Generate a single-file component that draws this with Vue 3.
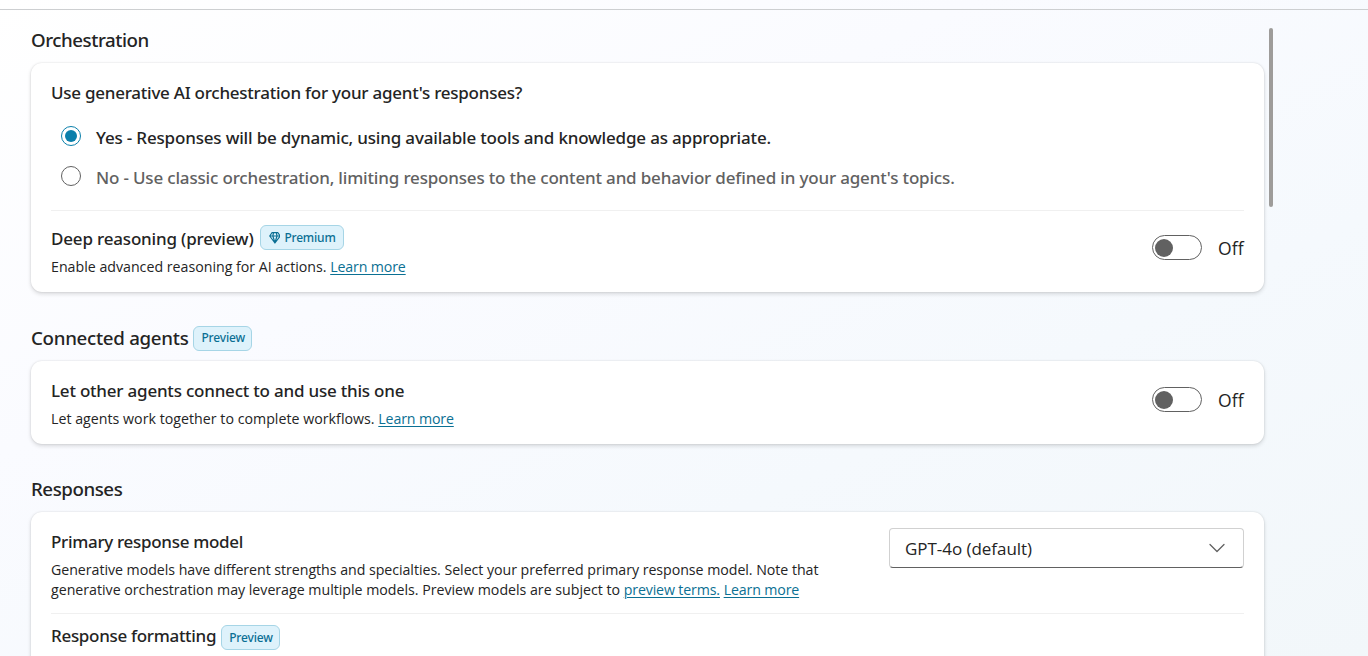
<script setup>
import { ref } from 'vue'

const mode = ref('yes')
const options = [
  { id: 'yes', text: 'Yes - Responses will be dynamic, using available tools and knowledge as appropriate.' },
  { id: 'no', text: "No - Use classic orchestration, limiting responses to the content and behavior defined in your agent's topics." }
]
</script>

<template>
  <div class="page">
    <div class="topbar"></div>
    <div class="body">
      <main class="content">
        <section class="orchestration">
          <h2 class="heading tight">Orchestration</h2>
          <div class="card">
            <h3 class="title question">Use generative AI orchestration for your agent's responses?</h3>
            <div class="options">
              <div
                v-for="o in options"
                :key="o.id"
                class="option"
                :class="{ selected: mode === o.id }"
                @click="mode = o.id"
              >
                <span class="radio"></span>
                <span class="label">{{ o.text }}</span>
              </div>
            </div>
            <div class="row deep">
              <div class="info">
                <div class="titleline">
                  <h3 class="title">Deep reasoning (preview)</h3>
                  <span class="badge premium">
                    <svg width="13" height="14" viewBox="0 0 13 14" fill="none" stroke="currentColor" stroke-width="1.3" stroke-linejoin="round">
                      <path d="M3.2 1.2h6.6l2.4 3.6-5.7 7.7L.8 4.8zM.8 4.8h11.4M4.2 4.8l2.3 7.3 2.3-7.3M4.2 4.8l.8-3.6M8.8 4.8 8 1.2" />
                    </svg>
                    <span>Premium</span>
                  </span>
                </div>
                <p class="desc">Enable advanced reasoning for AI actions. <a>Learn more</a></p>
              </div>
              <div class="switch"><span class="track"></span><span class="state">Off</span></div>
            </div>
          </div>
        </section>

        <section class="connected">
          <div class="headline">
            <h2 class="heading">Connected agents</h2>
            <span class="badge">Preview</span>
          </div>
          <div class="card">
            <div class="row">
              <div class="info">
                <h3 class="title">Let other agents connect to and use this one</h3>
                <p class="desc">Let agents work together to complete workflows. <a>Learn more</a></p>
              </div>
              <div class="switch"><span class="track"></span><span class="state">Off</span></div>
            </div>
          </div>
        </section>

        <section class="responses">
          <h2 class="heading tight">Responses</h2>
          <div class="card">
            <div class="row model">
              <div class="info">
                <h3 class="title snug">Primary response model</h3>
                <p class="desc long">
                  Generative models have different strengths and specialties. Select your preferred primary response model. Note that<br /><span class="second">generative orchestration may leverage multiple models. Preview models are subject to <a>preview terms.</a> <a>Learn more</a></span>
                </p>
              </div>
              <div class="select">
                <span>GPT-4o (default)</span>
                <svg width="16" height="10" viewBox="0 0 16 10" fill="none" stroke="#616161" stroke-width="1.3" stroke-linecap="round" stroke-linejoin="round">
                  <path d="M1 1.5 8 8.5l7-7" />
                </svg>
              </div>
            </div>
            <div class="titleline formatting">
              <h3 class="title snug">Response formatting</h3>
              <span class="badge">Preview</span>
            </div>
          </div>
        </section>
      </main>
      <div class="scrollbar"></div>
    </div>
  </div>
</template>

<style>
body {
  margin: 0;
  overflow: hidden;
}
</style>

<style scoped>
.page {
  height: 656px;
  overflow: hidden;
  box-sizing: border-box;
  background: linear-gradient(155deg, #fff 0%, #fafbff 35%, #f5f9fd 66%, #f2f7fa 100%);
  color: #242424;
  font-family: "Open Sans", "Noto Sans", sans-serif;
}
.topbar {
  height: 9px;
  border-bottom: 1px solid #cdcfd1;
}
.body {
  display: flex;
  gap: 5px;
  padding-left: 31px;
}
.content {
  width: 1233px;
  padding-top: 16px;
}
.scrollbar {
  width: 4px;
  height: 179px;
  margin-top: 18px;
  border-radius: 2px;
  background: #9e9c9a;
}
h2,
h3,
p {
  margin: 0;
}
.heading {
  font: 500 18.7px/28px "Noto Sans", sans-serif;
  letter-spacing: -0.28px;
  white-space: nowrap;
}
.heading.tight {
  letter-spacing: -0.44px;
}
.headline .heading {
  margin-top: -2px;
}
.card {
  box-sizing: border-box;
  padding: 18px 20px 0;
  border-radius: 11px;
  background: #fff;
  box-shadow: 0 0 2px rgba(0, 0, 0, 0.12), 0 2px 4px rgba(0, 0, 0, 0.14);
}
.orchestration .card {
  height: 229px;
  margin-top: 9px;
}
.title {
  font: 500 17px/24px "Noto Sans", sans-serif;
  letter-spacing: -0.18px;
  white-space: nowrap;
}
.title.question {
  letter-spacing: -0.25px;
}
.connected .title {
  letter-spacing: -0.215px;
}
.title.snug {
  letter-spacing: -0.31px;
}
.options {
  padding: 11px 0 14px;
  border-bottom: 1px solid #f0f0f0;
}
.option {
  display: flex;
  align-items: center;
  height: 40px;
  padding-left: 10px;
  gap: 15px;
  color: #616161;
}
.option.selected {
  color: #242424;
}
.radio {
  display: grid;
  place-items: center;
  box-sizing: border-box;
  width: 20px;
  height: 20px;
  border: 1px solid #616161;
  border-radius: 50%;
}
.selected .radio {
  border-color: #0a7fab;
}
.selected .radio::after {
  content: "";
  width: 12px;
  height: 12px;
  border-radius: 50%;
  background: #0a7fab;
}
.label {
  margin-top: 3px;
  font: 500 17px/24px "Noto Sans", sans-serif;
  letter-spacing: -0.175px;
  white-space: nowrap;
}
.row {
  display: flex;
  justify-content: space-between;
}
.deep {
  padding-top: 14px;
}
.titleline,
.headline {
  display: flex;
  align-items: center;
  height: 25px;
}
.titleline .title {
  margin-top: 2px;
}
.badge {
  display: flex;
  align-items: center;
  box-sizing: border-box;
  width: 59px;
  height: 25px;
  margin-left: 5px;
  padding: 0 7px;
  border: 1px solid #a6d5e6;
  border-radius: 6px;
  background: #def2fb;
  color: #0b6f94;
  font: 500 12px/22px "Noto Sans", sans-serif;
  letter-spacing: -0.17px;
}
.headline .badge {
  padding-bottom: 2px;
}
.badge.premium {
  gap: 4px;
  width: 84px;
  margin-left: 6px;
  padding-left: 8px;
  letter-spacing: -0.2px;
}
.desc {
  font-size: 14.2px;
  line-height: 20px;
  letter-spacing: 0;
  white-space: nowrap;
}
.deep .desc {
  margin-top: 7px;
}
.desc.long {
  letter-spacing: -0.04px;
}
.desc .second {
  letter-spacing: -0.01px;
}
.desc a {
  color: #0b7093;
  letter-spacing: -0.14px;
  text-decoration: underline;
  text-underline-offset: 2px;
  text-decoration-thickness: 1px;
}
.switch {
  display: flex;
  align-items: center;
  gap: 16px;
  height: 25px;
  margin-top: 10px;
}
.track {
  display: flex;
  align-items: center;
  box-sizing: border-box;
  width: 50px;
  height: 25px;
  padding-left: 2px;
  border: 1px solid #616161;
  border-radius: 13px;
}
.track::after {
  content: "";
  width: 18px;
  height: 18px;
  border-radius: 50%;
  background: #616161;
}
.state {
  margin-top: 1px;
  width: 26px;
  font-size: 17.5px;
  line-height: 24px;
  letter-spacing: 0.1px;
}
.connected {
  margin-top: 34px;
}
.connected .card {
  height: 83px;
  margin-top: 10px;
}
.connected .desc {
  margin-top: 6px;
  letter-spacing: 0.02px;
}
.connected .switch {
  margin-top: 8px;
}
.responses {
  margin-top: 31px;
}
.responses .card {
  height: 220px;
  margin-top: 9px;
  padding-top: 16px;
}
.model {
  box-sizing: border-box;
  height: 86px;
  border-bottom: 1px solid #f0f0f0;
}
.model .title {
  margin-top: 2px;
}
.model .desc {
  margin-top: 6px;
}
.select {
  display: flex;
  align-items: center;
  justify-content: space-between;
  box-sizing: border-box;
  width: 355px;
  height: 40px;
  padding: 0 18px 0 15px;
  border: 1px solid #d1d1d1;
  border-bottom-color: #616161;
  border-radius: 4px;
  font-size: 17px;
  letter-spacing: -0.04px;
}
.formatting {
  margin-top: 11px;
}
.formatting .title {
  margin-top: -3px;
}
</style>
